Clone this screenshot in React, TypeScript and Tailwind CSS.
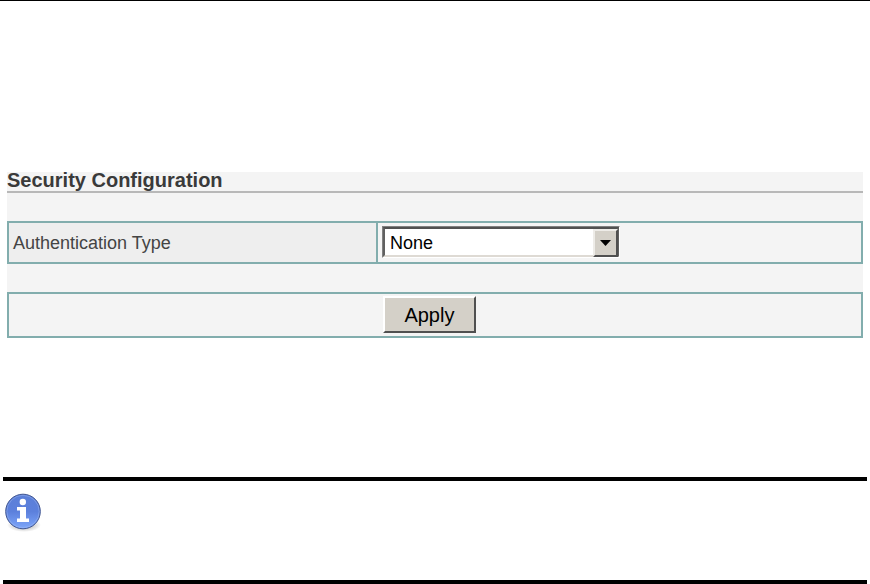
import { useState } from "react";

function InfoIcon() {
  return (
    <svg
      width="40"
      height="40"
      viewBox="0 0 40 40"
      role="img"
      aria-label="Information"
    >
      <defs>
        <linearGradient id="ball" x1="0" y1="0" x2="0" y2="1">
          <stop offset="0" stopColor="#5b7fd8" />
          <stop offset="0.5" stopColor="#5c80dc" />
          <stop offset="1" stopColor="#7da6fa" />
        </linearGradient>
        <radialGradient id="shade">
          <stop offset="0.5" stopColor="#000" stopOpacity="0.2" />
          <stop offset="1" stopColor="#000" stopOpacity="0" />
        </radialGradient>
      </defs>
      <ellipse cx="21" cy="32" rx="17" ry="7" fill="url(#shade)" />
      <circle cx="20" cy="18.5" r="17.3" fill="url(#ball)" stroke="#405590" />
      <circle cx="20" cy="18.5" r="16.2" fill="none" stroke="#a9c0f2" strokeOpacity="0.4" />
      <circle cx="19.8" cy="9" r="3.2" fill="#fff" />
      <path d="M14 14H23V25.5H26V29H14V25.5H17V17.5H14Z" fill="#fff" />
    </svg>
  );
}

export default function App() {
  const [authType, setAuthType] = useState("None");

  return (
    <div className="bg-white border-t border-black font-['Liberation_Sans',Arial,sans-serif]">
      {/* Security form */}
      <form
        onSubmit={(e) => e.preventDefault()}
        className="mt-[171px] mx-[7px] bg-[#f4f4f4]"
      >
        <h1 className="h-[21px] border-b-2 border-[#b8b8b8] text-xl leading-4 font-bold text-[#3a3a3a]">
          Security Configuration
        </h1>

        <div className="mt-7 flex border-2 border-[#82adad]">
          <div className="w-[43.3%] flex items-center bg-[#eeeeee] border-r-2 border-[#82adad] pl-1">
            <label htmlFor="auth-type" className="text-lg leading-5 text-[#444444]">
              Authentication Type
            </label>
          </div>

          <div className="flex-1 px-1 pt-[3px] pb-1">
            <div className="relative w-[238px] border border-t-[#808080] border-l-[#808080] border-r-white border-b-white">
              <select
                id="auth-type"
                value={authType}
                onChange={(e) => setAuthType(e.target.value)}
                className="block w-full h-[30px] appearance-none rounded-none bg-white border-2 border-t-[#505050] border-l-[#606060] border-r-[#606060] border-b-[#dedad4] pl-[5px] pt-[2px] text-lg leading-6 text-black"
              >
                <option>None</option>
                <option>WEP</option>
                <option>WPA</option>
              </select>
              <span className="pointer-events-none absolute top-[2px] right-[1px] bottom-0 w-[25px] flex items-center justify-center bg-[#d4d0c8] border-2 border-t-[#eeece8] border-l-[#eeece8] border-r-[#505050] border-b-[#505050]">
                <svg width="11" height="6" viewBox="0 0 11 6" aria-hidden="true">
                  <path d="M0 0H11L5.5 6Z" fill="#000" />
                </svg>
              </span>
            </div>
          </div>
        </div>

        <div className="mt-7 flex border-2 border-[#82adad]">
          <div className="w-[43.3%]" />
          <div className="flex-1 px-[5px] pt-[2px] pb-[3px]">
            <button
              type="submit"
              className="block w-[93px] h-[37px] bg-[#d4d0c8] border-2 border-t-white border-l-white border-r-[#505050] border-b-[#505050] text-xl leading-6 text-black"
            >
              Apply
            </button>
          </div>
        </div>
      </form>

      {/* Note */}
      <div className="mt-[139px] mx-[3px] h-[107px] border-y-4 border-black pt-3">
        <InfoIcon />
      </div>
    </div>
  );
}
